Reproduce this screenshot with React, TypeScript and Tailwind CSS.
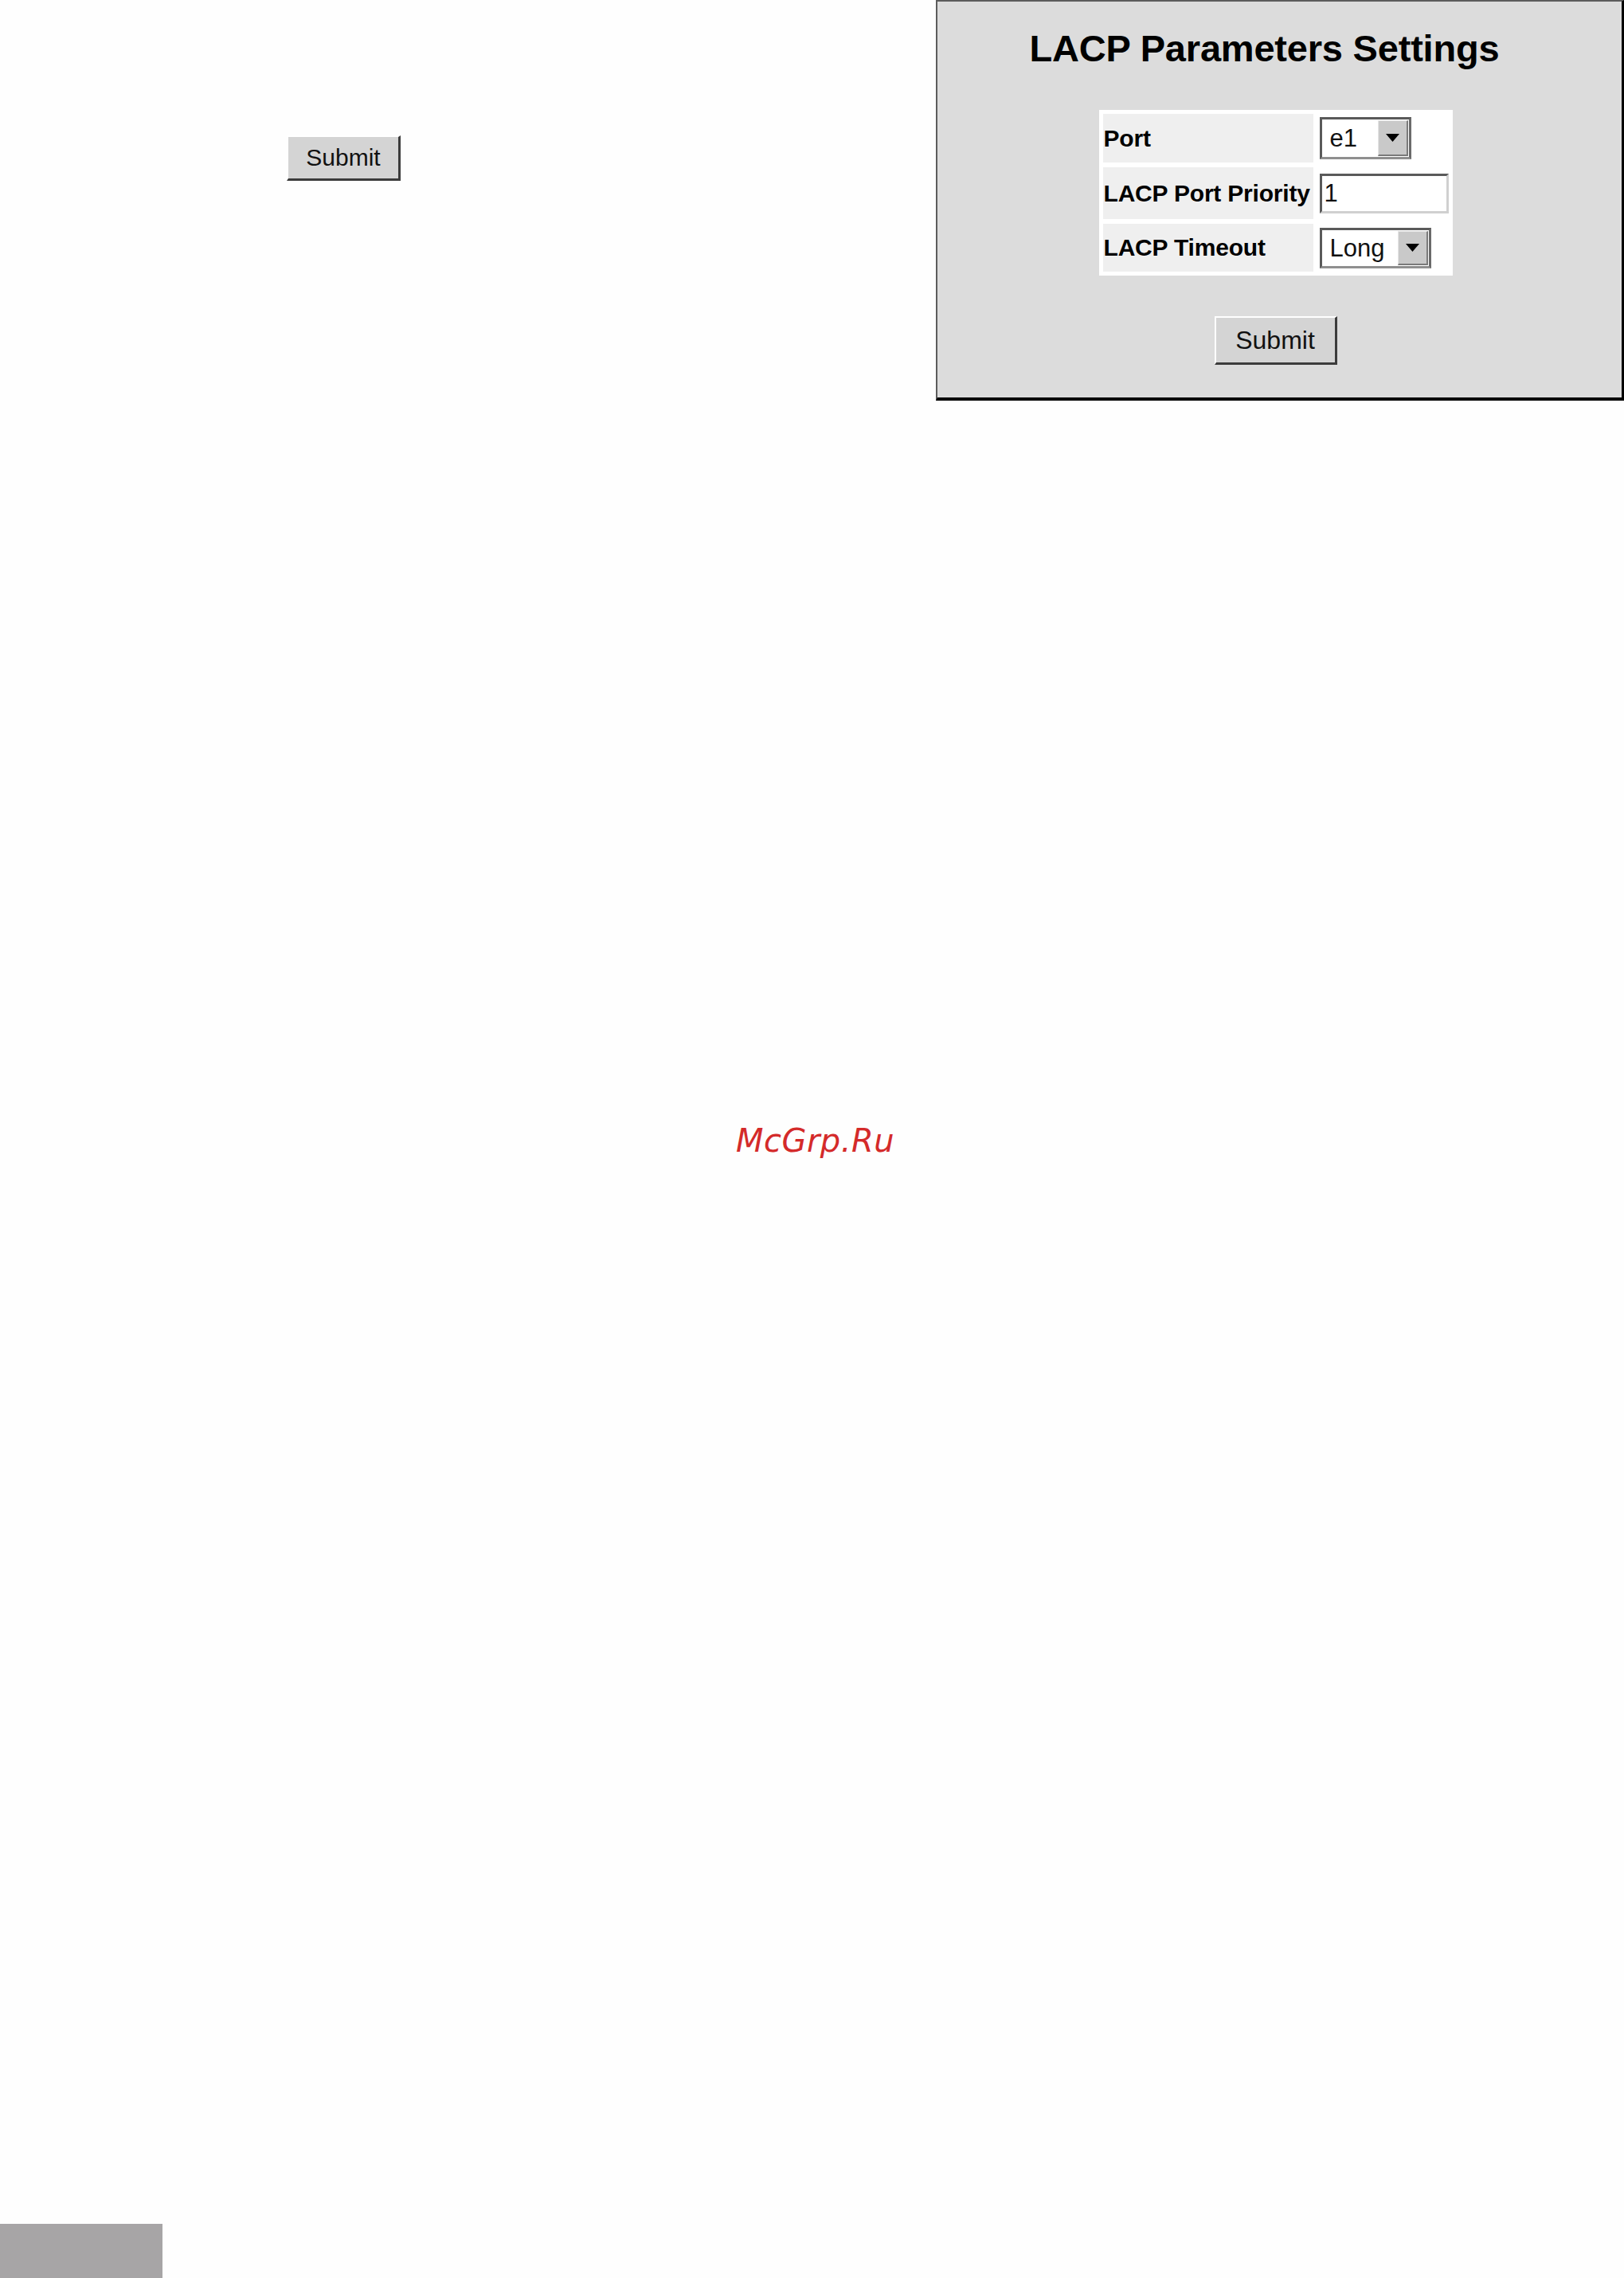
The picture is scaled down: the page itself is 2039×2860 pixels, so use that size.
import React from 'react'

const ui = { fontFamily: '"Liberation Sans", Arial, sans-serif' }

// classic grey push button with a raised bevel
const SubmitButton = ({ className = '' }: { className?: string }) => (
  <button
    type="button"
    className={`flex items-center justify-center bg-[#d4d4d4] text-[#111] border-t-2 border-l-2 border-t-white border-l-white border-b-[3px] border-r-[3px] border-b-[#3c3c3c] border-r-[#3c3c3c] leading-none ${className}`}
    style={ui}
  >
    Submit
  </button>
)

const Arrow = () => (
  <svg width="17" height="10" viewBox="0 0 17 10">
    <polygon points="0,0 17,0 8.5,10" fill="#000" />
  </svg>
)

interface FakeSelectProps {
  value: string
  width: string
  height: string
}

const FakeSelect = ({ value, width, height }: FakeSelectProps) => (
  <div
    className={`flex bg-white border-[3px] border-t-[#5a5a5a] border-l-[#5a5a5a] border-b-[#8f8f8f] border-r-[#6a6a6a] ${width} ${height}`}
  >
    <span className="flex-1 flex items-center pl-[10px] text-[31px] text-[#111] leading-none" style={ui}>
      {value}
    </span>
    <span className="w-[38px] my-[1px] mr-[1px] flex items-center justify-center bg-[#c9c9c9] border-t border-l border-t-[#e6e6e6] border-l-[#e6e6e6] border-b-2 border-r-2 border-b-[#7a7a7a] border-r-[#7a7a7a]">
      <Arrow />
    </span>
  </div>
)

const rows = [
  { label: 'Port', h: 'h-[61px]', field: <FakeSelect value="e1" width="w-[115px]" height="h-[53px]" /> },
  {
    label: 'LACP Port Priority',
    h: 'h-[65px]',
    field: (
      <div className="w-[162px] h-[50px] bg-white border-[3px] border-t-[#5a5a5a] border-l-[#5a5a5a] border-b-[#d0d0d0] border-r-[#d0d0d0] flex items-center pl-[3px] text-[31px] text-[#111] leading-none" style={ui}>
        1
      </div>
    )
  },
  { label: 'LACP Timeout', h: 'h-[60px]', field: <FakeSelect value="Long" width="w-[140px]" height="h-[51px]" /> }
]

export default function App() {
  return (
    <div className="w-[2039px] h-[2860px] bg-[#fefefe] flex flex-col" style={ui}>
      {/* top strip: stray button + settings panel */}
      <div className="flex">
        <div className="flex-1 pt-[170px] pl-[360px]">
          <SubmitButton className="w-[143px] h-[57px] text-[30px]" />
        </div>

        <div className="w-[864px] h-[503px] bg-[#dcdcdc] border-t-2 border-l-2 border-t-[#5c5c5c] border-l-[#5c5c5c] border-b-4 border-r-[3px] border-b-black border-r-black flex flex-col items-center">
          <h1 className="mt-[35px] mr-[38px] text-[47px] font-bold leading-none text-black tracking-[-0.2px]">
            LACP Parameters Settings
          </h1>

          <div className="mt-[54px] bg-white p-[5px] flex flex-col gap-[6px] mr-[10px]">
            {rows.map((r) => (
              <div key={r.label} className={`flex ${r.h}`}>
                <div className="w-[264px] bg-[#efefef] flex items-center pl-[1px] text-[30px] font-bold text-black leading-none tracking-[-0.2px]">
                  {r.label}
                </div>
                <div className="w-[170px] flex items-center pl-[8px]">{r.field}</div>
              </div>
            ))}
          </div>

          <SubmitButton className="mt-[51px] mr-[10px] w-[154px] h-[61px] text-[32px]" />
        </div>
      </div>

      {/* watermark */}
      <div className="mt-[909px] flex justify-center">
        <span
          className="italic text-[40px] leading-none text-[#d42a2a] tracking-[0.5px] ml-[8px]"
          style={{ fontFamily: '"DejaVu Sans", sans-serif' }}
        >
          McGrp.Ru
        </span>
      </div>

      {/* page tab in the corner */}
      <div className="mt-auto w-[204px] h-[68px] bg-[#a7a5a6]" />
    </div>
  )
}
